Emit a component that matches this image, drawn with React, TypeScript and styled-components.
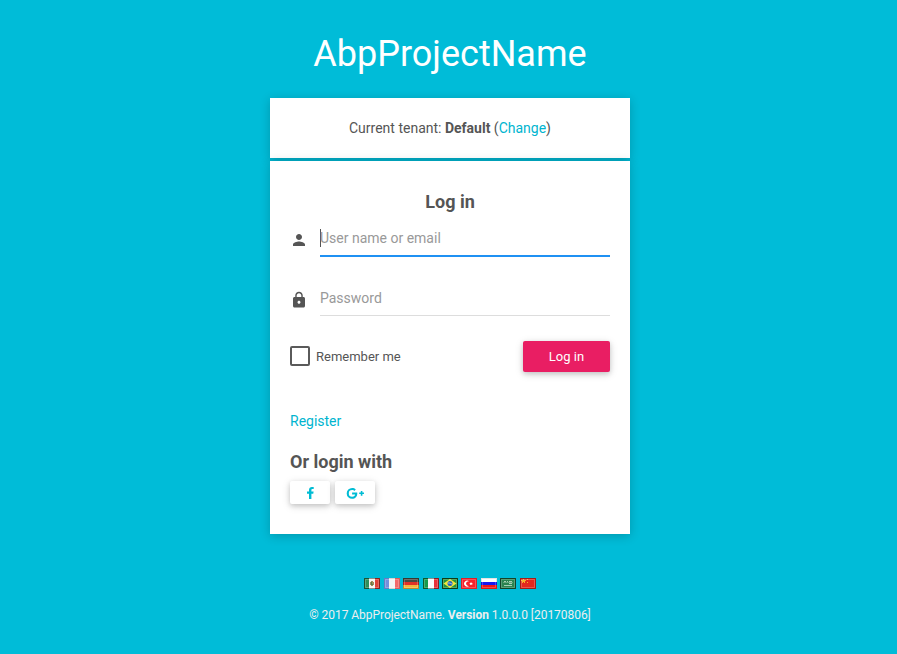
import React from "react";
import styled, { createGlobalStyle } from "styled-components";

const GlobalStyle = createGlobalStyle`
  * { box-sizing: border-box; }
  body {
    margin: 0;
    background: #00bcd8;
    font-family: Roboto, "Liberation Sans", sans-serif;
    font-size: 14px;
    color: #555;
    overflow: hidden;
  }
  a { color: #00b5cf; text-decoration: none; }
`;

const Page = styled.main`
  width: 360px;
  height: 654px;
  margin-left: 270px;
  display: flex;
  flex-direction: column;
`;

const Logo = styled.h1`
  margin: 0;
  padding-top: 33px;
  height: 98px;
  font-size: 36px;
  line-height: 43px;
  font-weight: 400;
  color: #fff;
  text-align: center;
`;

const Card = styled.section`
  background: #fff;
  box-shadow: 0 2px 10px rgba(0, 0, 0, 0.2);
`;

const TenantCard = styled(Card)`
  height: 60px;
  margin-bottom: 3px;
  line-height: 60px;
  text-align: center;
`;

const LoginCard = styled(Card)`
  height: 373px;
  padding: 30px 20px;
`;

const Heading = styled.h4<{ $center?: boolean }>`
  margin: 0;
  font-size: 18px;
  line-height: 22px;
  font-weight: 700;
  text-align: ${(p) => (p.$center ? "center" : "left")};
`;

const Field = styled.label<{ $focused?: boolean }>`
  display: grid;
  grid-template-columns: 30px 1fr;
  height: ${(p) => (p.$focused ? "34px" : "33px")};
  margin-top: ${(p) => (p.$focused ? "10px" : "26px")};
`;

const FieldIcon = styled.svg`
  width: 18px;
  height: 18px;
  margin-top: 8px;
  fill: #555;
`;

const FieldLine = styled.span<{ $focused?: boolean }>`
  display: flex;
  align-items: flex-start;
  border-bottom: ${(p) => (p.$focused ? "2px solid #1f91f3" : "1px solid #ddd")};
  padding-top: 6px;
`;

const Caret = styled.span`
  width: 1px;
  height: 18px;
  margin-right: -1px;
  background: #555;
`;

const Input = styled.input`
  width: 100%;
  height: 18px;
  padding: 0;
  border: 0;
  outline: 0;
  background: transparent;
  font: inherit;
  line-height: 18px;
  &::placeholder { color: #999; opacity: 1; }
`;

const ActionRow = styled.div`
  display: flex;
  align-items: center;
  justify-content: space-between;
  height: 31px;
  margin-top: 25px;
`;

const Remember = styled.label`
  display: flex;
  align-items: center;
  gap: 6px;
  font-size: 13px;
`;

const Box = styled.span`
  width: 20px;
  height: 20px;
  margin-bottom: 1px;
  border: 2px solid #5a5a5a;
  border-radius: 2px;
`;

const Button = styled.button`
  width: 87px;
  height: 31px;
  padding: 0;
  border: 0;
  border-radius: 2px;
  background: #e91e63;
  color: #fff;
  font: 13px Roboto, "Liberation Sans", sans-serif;
  box-shadow: 0 2px 5px rgba(0, 0, 0, 0.16), 0 2px 10px rgba(0, 0, 0, 0.12);
`;

const Register = styled.p`
  margin: 39px 0 20px;
  line-height: 20px;
`;

const SocialRow = styled.div`
  display: flex;
  gap: 5px;
  margin-top: 8px;
`;

const SocialButton = styled(Button)`
  display: flex;
  justify-content: center;
  width: 40px;
  height: 23px;
  background: #fff;
`;

const SocialIcon = styled.svg`
  fill: #00bcd4;
`;

const Languages = styled.div`
  display: flex;
  gap: 3.44px;
  margin: 44px 0 0 94.22px;
`;

const FlagIcon = styled.svg`
  display: block;
  flex: none;
  width: 16px;
  height: 11px;
`;

const Footer = styled.footer`
  margin-top: 18px;
  font-size: 12px;
  line-height: 17px;
  letter-spacing: -0.045px;
  text-align: center;
  color: #eee;
`;

const stripesV = (a: string, b: string, c: string) => (
  <>
    <path fill={a} d="M0 0h5v11H0z" />
    <path fill={b} d="M5 0h6v11H5z" />
    <path fill={c} d="M11 0h5v11h-5z" />
  </>
);

const stripesH = (a: string, b: string, c: string) => (
  <>
    <path fill={a} d="M0 0h16v4H0z" />
    <path fill={b} d="M0 4h16v3H0z" />
    <path fill={c} d="M0 7h16v4H0z" />
  </>
);

const flags: { name: string; edge: number; art: React.ReactNode }[] = [
  {
    name: "Mexico",
    edge: 0.42,
    art: (
      <>
        {stripesV("#2f8f5c", "#f6f6f2", "#e04038")}
        <path fill="#a58a58" d="M7 3h2v1h1v3H9v1H7V7H6V4h1z" />
        <path fill="#5d7d4a" d="M7 4h1v2h1v1H7z" />
      </>
    ),
  },
  { name: "France", edge: 0.12, art: stripesV("#7490dd", "#f4f4f4", "#f46a6a") },
  { name: "Germany", edge: 0.25, art: stripesH("#4a4a42", "#e03226", "#f3b63c") },
  { name: "Italy", edge: 0.42, art: stripesV("#159a4c", "#fafafa", "#e8323a") },
  {
    name: "Brazil",
    edge: 0.6,
    art: (
      <>
        <path fill="#26923a" d="M0 0h16v11H0z" />
        <path fill="#f2e73c" d="M8 1l6.500 4.500L8 10 1.500 5.500z" />
        <circle cx="8" cy="5.500" r="2.500" fill="#2960b8" />
        <path stroke="#d5e5f2" strokeWidth=".7" fill="none" d="M5.800 5q2.300-.5 4.300 1.200" />
      </>
    ),
  },
  {
    name: "Turkey",
    edge: 0.1,
    art: (
      <>
        <path fill="#f5222b" d="M0 0h16v11H0z" />
        <path fill="#fff" d="M8.300 3.500A3 3 0 1 0 8.300 7.700 2.300 2.300 0 1 1 8.300 3.500z" />
        <path fill="#fff" d="M10 4l.6 1H12l-1 .8.4 1.300-1.300-.7-1.200.6.2-1.300-.9-.7h1.300z" />
      </>
    ),
  },
  { name: "Russia", edge: 0.1, art: stripesH("#ffffff", "#1818f0", "#f01818") },
  {
    name: "Saudi Arabia",
    edge: 0.5,
    art: (
      <>
        <path fill="#2b8450" d="M0 0h16v11H0z" />
        <path fill="#a8d0b5" d="M4 3h2v2H4zM7 3h1v2H7zM9 3h3v1H9zM9 5h3v1H9zM4 7h8v1H4z" />
        <path fill="#67a97e" d="M3 4h10v1H3z" />
      </>
    ),
  },
  {
    name: "China",
    edge: 0.28,
    art: (
      <>
        <path fill="#e4281e" d="M0 0h16v11H0z" />
        <path fill="#f8b02c" d="M3 1h1v1h2v1H5v2H4V4H3v1H2V3H1V2h2zM7 1h1v1H7zM7 4h1v1H7z" />
      </>
    ),
  },
];

export default function App() {
  return (
    <>
      <GlobalStyle />
      <Page>
        <Logo>AbpProjectName</Logo>
        <TenantCard>
          Current tenant: <strong>Default</strong> (<a href="#">Change</a>)
        </TenantCard>
        <LoginCard>
          <Heading $center>Log in</Heading>
          <Field $focused>
            <FieldIcon viewBox="0 0 24 24">
              <path d="M12 12c2.210 0 4-1.790 4-4s-1.790-4-4-4-4 1.790-4 4 1.790 4 4 4zm0 2c-2.670 0-8 1.340-8 4v2h16v-2c0-2.660-5.330-4-8-4z" />
            </FieldIcon>
            <FieldLine $focused>
              <Caret />
              <Input placeholder="User name or email" />
            </FieldLine>
          </Field>
          <Field>
            <FieldIcon viewBox="0 0 24 24">
              <path d="M18 8h-1V6c0-2.760-2.240-5-5-5S7 3.240 7 6v2H6c-1.100 0-2 .9-2 2v10c0 1.100.9 2 2 2h12c1.100 0 2-.9 2-2V10c0-1.100-.9-2-2-2zm-6 9c-1.100 0-2-.9-2-2s.9-2 2-2 2 .9 2 2-.9 2-2 2zm3.100-9H8.900V6c0-1.710 1.390-3.100 3.100-3.100s3.100 1.390 3.100 3.100v2z" />
            </FieldIcon>
            <FieldLine>
              <Input type="password" placeholder="Password" />
            </FieldLine>
          </Field>
          <ActionRow>
            <Remember>
              <Box />
              Remember me
            </Remember>
            <Button>Log in</Button>
          </ActionRow>
          <Register>
            <a href="#">Register</a>
          </Register>
          <Heading>Or login with</Heading>
          <SocialRow>
            <SocialButton aria-label="Facebook">
              <SocialIcon width="40" height="23" viewBox="0 0 40 23">
                <path d="M23.700 6.100v2h-1.200c-.9 0-1.100.4-1.100 1.100v1.300h2.200l-.3 2.200h-1.900V18H19v-5.300h-2v-2.200h2V8.900C19 7 20.200 6 21.900 6c.8 0 1.500.1 1.800.1z" />
              </SocialIcon>
            </SocialButton>
            <SocialButton aria-label="Google Plus">
              <SocialIcon width="40" height="23" viewBox="0 0 40 23">
                <path d="M22.300 12.500c0 3.100-2.100 5.300-5.200 5.300a5.400 5.400 0 1 1 0-10.800c1.500 0 2.700.5 3.700 1.400l-1.500 1.500c-.4-.4-1.100-.8-2.200-.8a3.300 3.300 0 0 0 0 6.600c2.100 0 2.900-1.500 3-2.300h-3v-1.900h5.100l.1 1zM29 11.500v1.600h-1.600v1.600h-1.600v-1.600h-1.600v-1.600h1.600V9.900h1.600v1.600z" />
              </SocialIcon>
            </SocialButton>
          </SocialRow>
        </LoginCard>
        <Languages>
          {flags.map((f) => (
            <FlagIcon key={f.name} viewBox="0 0 16 11" role="img" aria-label={f.name}>
              {f.art}
              <path fill="none" stroke="#fff" strokeOpacity=".22" d="M1.500 1.500h13v8h-13z" />
              <path fill="none" stroke="#000" strokeOpacity={f.edge} d="M.5.5h15v10H.5z" />
            </FlagIcon>
          ))}
        </Languages>
        <Footer>
          © 2017 AbpProjectName. <strong>Version</strong> 1.0.0.0 [20170806]
        </Footer>
      </Page>
    </>
  );
}
